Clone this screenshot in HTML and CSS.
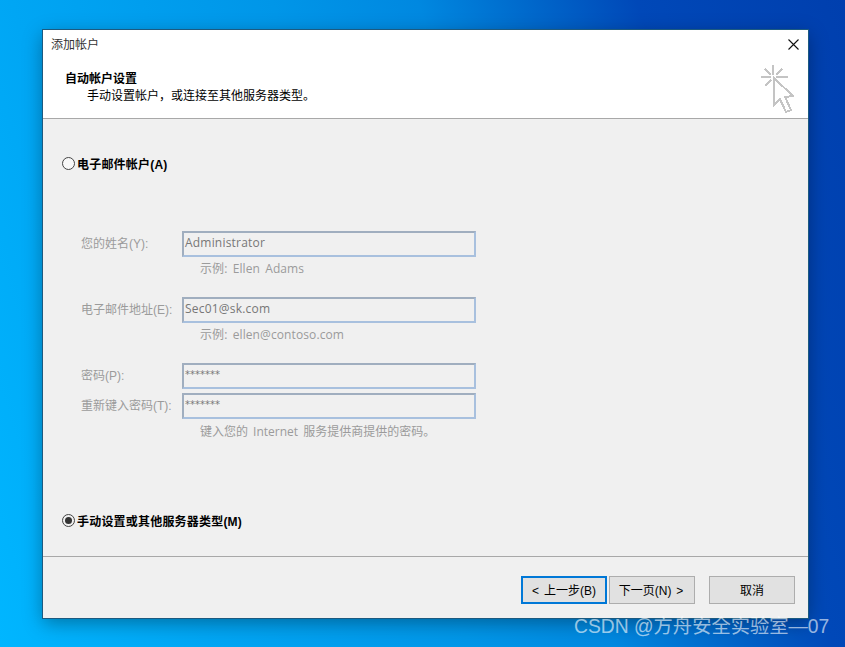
FILE: index.html
```html
<!DOCTYPE html>
<html lang="zh-CN">
<head>
  <meta charset="UTF-8">
  <title>添加帐户</title>
  <link rel="stylesheet" href="styles.css">
</head>
<body>
  <!-- Dialog -->
  <div class="window">
    <div class="title-bar">
      <span class="title-text">添加帐户</span>
      <svg class="close-icon" width="11" height="11" viewBox="0 0 11 11">
        <path d="M0.5 0.5L10.5 10.5M10.5 0.5L0.5 10.5" stroke="#111" stroke-width="1.1" fill="none"/>
      </svg>
    </div>

    <div class="header">
      <div class="header-text">
        <div class="header-title">自动帐户设置</div>
        <div class="header-sub">手动设置帐户，或连接至其他服务器类型。</div>
      </div>
      <svg class="header-icon" width="34" height="50" viewBox="0 0 34 50">
        <g stroke="#c4c4c4" stroke-width="2" fill="none">
          <path d="M13 1V11M1 13H11M16 13H28M5 5L11 11M22 5L16 11M5 22L11 16"/>
          <path d="M14 14V41L20 35L26 48L31 46L25 33L33 32Z" fill="#fff"/>
        </g>
      </svg>
    </div>

    <div class="content">
      <label class="radio-row radio-top">
        <span class="radio"></span>
        <span>电子邮件帐户(A)</span>
      </label>

      <div class="fields">
        <div class="field">
          <span class="field-label">您的姓名(Y):</span>
          <div class="input">Administrator</div>
        </div>
        <div class="hint">示例: Ellen Adams</div>

        <div class="field field-gap">
          <span class="field-label">电子邮件地址(E):</span>
          <div class="input">Sec01@sk.com</div>
        </div>
        <div class="hint">示例: ellen@contoso.com</div>

        <div class="field field-gap">
          <span class="field-label">密码(P):</span>
          <div class="input input-pass">*******</div>
        </div>
        <div class="field field-tight">
          <span class="field-label">重新键入密码(T):</span>
          <div class="input input-pass">*******</div>
        </div>
        <div class="hint hint-last">键入您的 Internet 服务提供商提供的密码。</div>
      </div>

      <label class="radio-row radio-bottom">
        <span class="radio radio-on"></span>
        <span>手动设置或其他服务器类型(M)</span>
      </label>
    </div>

    <div class="footer">
      <button class="btn btn-focus">&lt; 上一步(B)</button>
      <button class="btn btn-next">下一页(N) &gt;</button>
      <button class="btn btn-cancel">取消</button>
    </div>
  </div>

  <div class="watermark">CSDN @方舟安全实验室—07</div>
</body>
</html>
```

FILE: styles.css
```css
/* General Styles */
html, body {
  height: 100%;
}

body {
  margin: 0;
  overflow: hidden;
  position: relative;
  font-family: "Liberation Sans", "Noto Sans CJK SC", sans-serif;
  font-size: 12px;
  color: #000;
  background: linear-gradient(73deg, #00b6ff 0%, #00a6f4 20%, #0096e8 45%, #0088e0 59%, #0070d0 67%, #0048b8 80%, #003fae 100%);
}

.window {
  position: absolute;
  left: 43px;
  top: 30px;
  width: 765px;
  height: 588px;
  display: flex;
  flex-direction: column;
  background-color: #f0f0f0;
  box-shadow: 0 0 0 1px #1c5a80, 0 5px 18px rgba(0, 0, 0, 0.35);
}

.title-bar {
  height: 29px;
  flex: none;
  box-sizing: border-box;
  display: flex;
  align-items: center;
  justify-content: space-between;
  padding: 0 9px 0 8px;
  background-color: #fff;
}

.title-text {
  color: #333;
  padding-bottom: 2px;
}

.header {
  height: 60px;
  flex: none;
  box-sizing: border-box;
  display: flex;
  justify-content: space-between;
  background-color: #fff;
  border-bottom: 1px solid #a8a8a8;
  padding-right: 14px;
}

.header-text {
  padding: 12px 0 0 22px;
}

.header-title {
  font-weight: bold;
  line-height: 17px;
}

.header-sub {
  line-height: 17px;
  padding-left: 22px;
}

.header-icon {
  margin-top: 5px;
  shape-rendering: crispEdges;
}

.content {
  height: 438px;
  flex: none;
  box-sizing: border-box;
  border-bottom: 1px solid #a8a8a8;
  padding: 35px 0 0 19px;
}

.radio-row {
  display: flex;
  align-items: center;
  gap: 2px;
  font-weight: bold;
  height: 18px;
  letter-spacing: 0.2px;
}

.radio {
  width: 11px;
  height: 11px;
  border: 1px solid #444;
  border-radius: 50%;
  background-color: #f8f8f8;
  display: flex;
  align-items: center;
  justify-content: center;
}

.radio-on {
  background-color: #f0f0f0;
}

.radio-on::after {
  content: '';
  width: 7px;
  height: 7px;
  border-radius: 50%;
  background-color: #333;
}

.fields {
  margin-top: 59px;
  color: #9b9b9b;
}

.field {
  display: flex;
  align-items: center;
  padding-left: 19px;
}

.field-gap {
  margin-top: 16px;
}

.field-tight {
  margin-top: 4px;
}

.field-label {
  width: 101px;
  flex: none;
  padding-bottom: 4px;
}

.input {
  width: 294px;
  height: 26px;
  box-sizing: border-box;
  border: 2px solid;
  border-color: #a0aebf #a8c0de #a8c0de #a0aebf;
  padding: 2px 0 0 1px;
  font-family: "Open Sans", "Noto Sans CJK SC", sans-serif;
  font-size: 12px;
  line-height: 16px;
  letter-spacing: 0.2px;
  color: #777;
}

.input-pass {
  font-size: 10px;
  font-family: "DejaVu Sans", sans-serif;
  letter-spacing: 0;
}

.hint {
  padding-left: 138px;
  height: 24px;
  line-height: 24px;
  font-family: "Open Sans", "Noto Sans CJK SC", sans-serif;
  letter-spacing: 0.1px;
  word-spacing: 2px;
}

.hint-last {
  padding-top: 1px;
  letter-spacing: 0;
}

.radio-bottom {
  margin-top: 67px;
}

.footer {
  flex: 1;
  display: flex;
  align-items: flex-start;
  padding: 19px 0 0 478px;
}

.btn {
  width: 86px;
  height: 28px;
  box-sizing: border-box;
  padding: 0 0 2px;
  border: 1px solid #adadad;
  background-color: #e1e1e1;
  font-family: "Liberation Sans", "Noto Sans CJK SC", sans-serif;
  font-size: 12px;
  word-spacing: 1.5px;
  color: #000;
}

.btn-focus {
  border: 2px solid #0078d7;
}

.btn-next {
  margin-left: 2px;
  padding-right: 2px;
}

.btn-cancel {
  margin-left: 14px;
}

.watermark {
  position: absolute;
  left: 574px;
  top: 616px;
  font-size: 19.3px;
  line-height: 22px;
  color: rgba(255, 255, 255, 0.6);
  white-space: nowrap;
}
```
